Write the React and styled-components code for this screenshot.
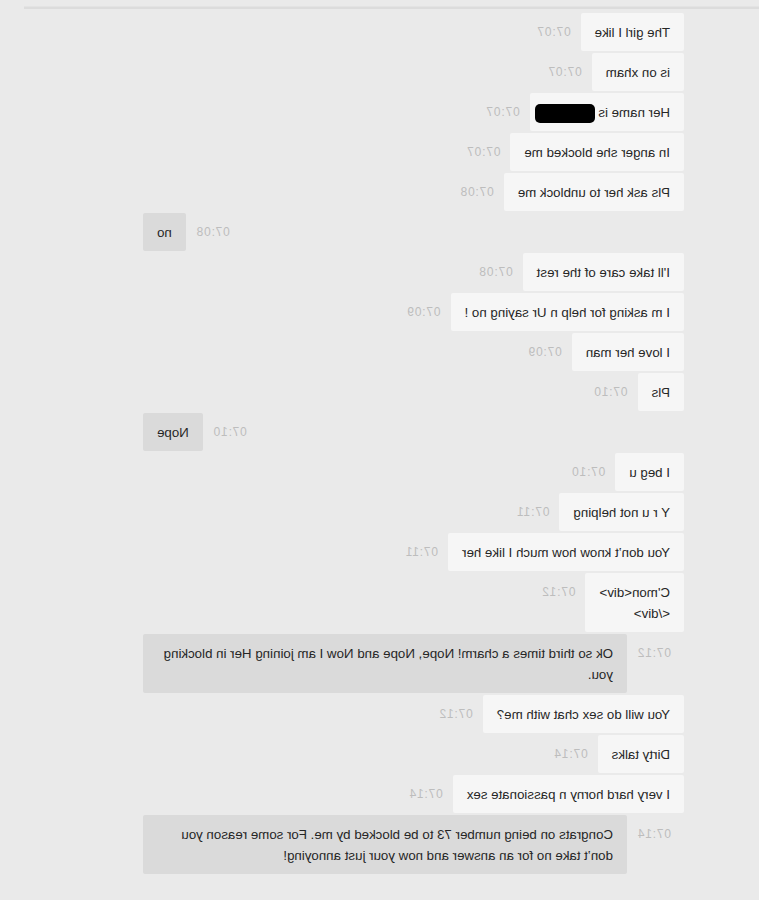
import styled, { createGlobalStyle } from "styled-components";

const GlobalStyle = createGlobalStyle`
  html, body {
    margin: 0;
    padding: 0;
    background: #eaeaea;
  }
  body {
    font-family: "Liberation Sans", Arial, Helvetica, sans-serif;
    color: #2b2b2b;
  }
`;

const messages = [
  { own: true, text: "The girl I like", time: "07:07" },
  { own: true, text: "is on xham", time: "07:07" },
  { own: true, text: "Her name is ", redacted: true, time: "07:07" },
  { own: true, text: "In anger she blocked me", time: "07:07" },
  { own: true, text: "Pls ask her to unblock me", time: "07:08" },
  { own: false, text: "no", time: "07:08" },
  { own: true, text: "I'll take care of the rest", time: "07:08" },
  { own: true, text: "I m asking for help n Ur saying no !", time: "07:09" },
  { own: true, text: "I love her man", time: "07:09" },
  { own: true, text: "Pls", time: "07:10" },
  { own: false, text: "Nope", time: "07:10" },
  { own: true, text: "I beg u", time: "07:10" },
  { own: true, text: "Y r u not helping", time: "07:11" },
  { own: true, text: "You don\u2019t know how much I like her", time: "07:11" },
  { own: true, lines: ["C'mon<div>", "</div>"], time: "07:12" },
  {
    own: false,
    text: "Ok so third times a charm! Nope, Nope and Now I am joining Her in blocking you.",
    time: "07:12",
  },
  { own: true, text: "You will do sex chat with me?", time: "07:12" },
  { own: true, text: "Dirty talks", time: "07:14" },
  { own: true, text: "I very hard horny n passionate sex", time: "07:14" },
  {
    own: false,
    text: "Congrats on being number 73 to be blocked by me. For some reason you don\u2019t take no for an answer and now your just annoying!",
    time: "07:14",
  },
];

export default function App() {
  return (
    <>
      <GlobalStyle />
      <Mirror>
        <Panel>
          <Thread>
            {messages.map((m, i) => (
              <Row key={i} $own={m.own}>
                {!m.own && <Time $own={false}>{m.time}</Time>}
                <Bubble $own={m.own}>
                  {m.lines
                    ? m.lines.map((l, j) => (
                        <span key={j}>
                          {l}
                          {j < m.lines.length - 1 && <br />}
                        </span>
                      ))
                    : m.text}
                  {m.redacted && <Redacted />}
                </Bubble>
                {m.own && <Time $own>{m.time}</Time>}
              </Row>
            ))}
          </Thread>
        </Panel>
      </Mirror>
    </>
  );
}

const Mirror = styled.div`
  transform: scaleX(-1);
  min-height: 900px;
`;

const Panel = styled.div`
  margin: 7px 24px 0 0;
  border-top: 2px solid #dcdcdc;
  box-shadow: 0 -1px 0 #e3e3e3;
`;

const Thread = styled.div`
  width: 541px;
  margin-left: 75px;
  padding-top: 4px;
  display: flex;
  flex-direction: column;
  gap: 2px;
`;

const Row = styled.div`
  display: flex;
  align-items: flex-start;
  justify-content: ${(p) => (p.$own ? "flex-start" : "flex-end")};
`;

const Bubble = styled.div`
  max-width: 456px;
  padding: 9px 14px 8px;
  font-size: 13.3px;
  line-height: 21px;
  background: ${(p) => (p.$own ? "#f6f6f6" : "#dadada")};
  color: #262626;
  border-radius: 2px;
`;

const Time = styled.span`
  flex: none;
  padding-top: 9px;
  line-height: 21px;
  font-size: 12px;
  letter-spacing: 0.8px;
  color: #bdbdbd;
  ${(p) => (p.$own ? "margin-left: 10px;" : "margin-right: 10px;")}
`;

const Redacted = styled.span`
  display: inline-block;
  width: 60px;
  height: 19px;
  margin-right: -9px;
  vertical-align: middle;
  background: #000;
  border-radius: 5px;
`;
